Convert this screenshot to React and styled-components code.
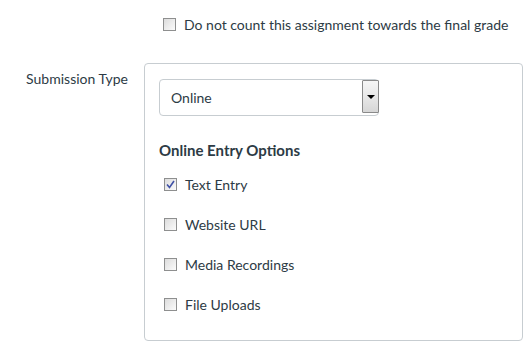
import React from "react";
import styled, { createGlobalStyle } from "styled-components";

const Global = createGlobalStyle`
  body {
    margin: 0;
    background: #fff;
    font-family: Lato, "Open Sans", sans-serif;
    color: #2d3b45;
  }
`;

const Page = styled.div`
  width: 530px;
  height: 356px;
  overflow: hidden;
`;

const Row = styled.div`
  display: grid;
  grid-template-columns: 144px 1fr;
  align-items: start;
`;

const TopRow = styled(Row)`
  padding-top: 14px;
  height: 63px;
  box-sizing: border-box;
`;

const Label = styled.div`
  text-align: right;
  padding-right: 16px;
  padding-top: 7px;
  font-size: 14px;
  line-height: 17px;
`;

const Panel = styled.div`
  width: 379px;
  box-sizing: border-box;
  border: 1px solid #c7cdd1;
  border-radius: 4px;
  padding: 15px 14px 16px 14px;
`;

const Select = styled.div`
  width: 220px;
  height: 37px;
  box-sizing: border-box;
  border: 1px solid #c7cdd1;
  border-radius: 4px;
  display: flex;
  align-items: stretch;
  font-size: 14px;
  background: #fff;
`;

const SelectText = styled.div`
  flex: 1;
  display: flex;
  align-items: center;
  padding-left: 11px;
`;

const ArrowButton = styled.div`
  width: 17px;
  margin: 0 -1px 2px 0;
  box-sizing: border-box;
  border: 1px solid #8a8a8a;
  border-radius: 1px;
  background: linear-gradient(#f6f6f6, #e8e8e8 50%, #d6d6d6);
  display: flex;
  align-items: center;
  justify-content: center;
`;

const Arrow = styled.span`
  width: 0;
  height: 0;
  border-left: 4px solid transparent;
  border-right: 4px solid transparent;
  border-top: 4px solid #000;
`;

const Heading = styled.div`
  font-weight: 700;
  font-size: 15px;
  line-height: 20px;
  margin: 24px 0 4px;
`;

const Option = styled.label`
  display: flex;
  align-items: center;
  height: ${(p) => p.h || 40}px;
  font-size: 14px;
  gap: 8px;
  padding-left: ${(p) => p.indent || 5}px;
`;

const Box = styled.span`
  width: 13px;
  height: 13px;
  box-sizing: border-box;
  border: 1px solid #8e8f8f;
  background: linear-gradient(135deg, #dcdcdc, #fbfbfb);
  display: flex;
  align-items: center;
  justify-content: center;
  flex: none;
`;

const Check = ({ checked }) => (
  <Box>
    {checked && (
      <svg width="9" height="9" viewBox="0 0 9 9">
        <path d="M1 4.5 L3.5 7.5 L8 1" fill="none" stroke="#3f51a6" strokeWidth="1.6" />
      </svg>
    )}
  </Box>
);

const options = [
  { label: "Text Entry", checked: true },
  { label: "Website URL" },
  { label: "Media Recordings" },
  { label: "File Uploads" },
];

const App = () => (
  <Page>
    <Global />
    <TopRow>
      <div />
      <Option h={20} indent={19}>
        <Check />
        Do not count this assignment towards the final grade
      </Option>
    </TopRow>
    <Row>
      <Label>Submission Type</Label>
      <Panel>
        <Select>
          <SelectText>Online</SelectText>
          <ArrowButton>
            <Arrow />
          </ArrowButton>
        </Select>
        <Heading>Online Entry Options</Heading>
        {options.map((o) => (
          <Option key={o.label}>
            <Check checked={o.checked} />
            {o.label}
          </Option>
        ))}
      </Panel>
    </Row>
  </Page>
);

export default App;
